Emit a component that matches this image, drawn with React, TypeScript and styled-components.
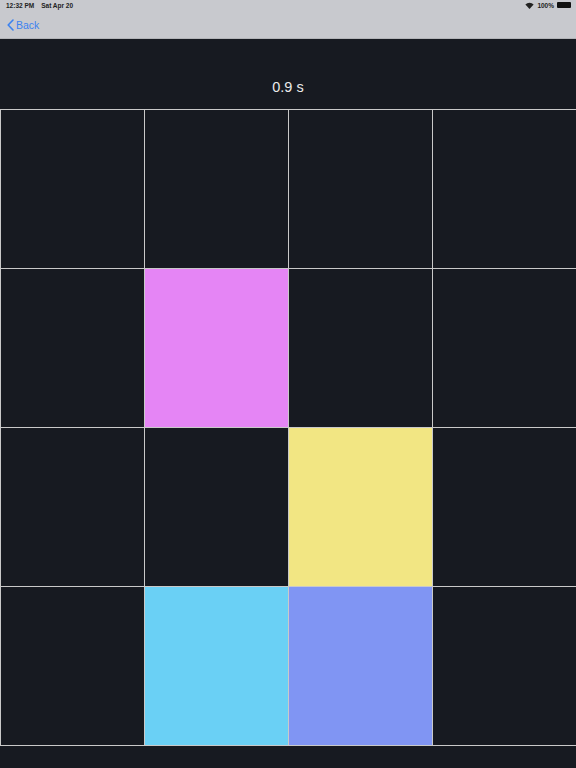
import React from "react";
import styled, { createGlobalStyle } from "styled-components";

type Cell = string | null;

const cells: Cell[] = [
  null, null, null, null,
  null, "#e585f5", null, null,
  null, null, "#f2e683", null,
  null, "#6ad0f5", "#8095f3", null,
];

const GlobalStyle = createGlobalStyle`
  html, body {
    margin: 0;
    padding: 0;
    background: #171a21;
    font-family: "Helvetica Neue", "Liberation Sans", Arial, sans-serif;
  }
`;

const Page = styled.div`
  width: 576px;
  height: 768px;
  overflow: hidden;
  background: #171a21;
  display: flex;
  flex-direction: column;
`;

const TopBar = styled.div`
  background: #c8c9ce;
  border-bottom: 1px solid #b3b4b8;
  height: 38px;
  display: flex;
  flex-direction: column;
`;

const StatusBar = styled.div`
  height: 10px;
  display: flex;
  align-items: center;
  justify-content: space-between;
  padding: 0 5px 0 6px;
  font-size: 6.5px;
  color: #222;
  font-weight: 600;
`;

const StatusLeft = styled.div`
  display: flex;
  gap: 7px;
`;

const StatusRight = styled.div`
  display: flex;
  align-items: center;
  gap: 3px;
`;

const Battery = styled.div`
  width: 14px;
  height: 6px;
  background: #111;
  border-radius: 1px;
`;

const NavBar = styled.div`
  flex: 1;
  display: flex;
  align-items: center;
  padding-left: 7px;
  padding-top: 2px;
`;

const BackButton = styled.div`
  display: flex;
  align-items: center;
  gap: 2px;
  color: #3b82f0;
  font-size: 10.5px;
`;

const TimerArea = styled.div`
  height: 70px;
  display: flex;
  align-items: flex-end;
  justify-content: center;
  color: #ebebeb;
  font-size: 14.5px;
  padding-bottom: 14px;
  box-sizing: border-box;
`;

const Grid = styled.div`
  display: grid;
  grid-template-columns: 143px 143px 143px 143px;
  grid-template-rows: repeat(4, 158px);
  gap: 1px;
  width: 576px;
  background: #c9c9c9;
  border-top: 1px solid #c9c9c9;
  border-bottom: 1px solid #c9c9c9;
  border-left: 1px solid #c9c9c9;
  box-sizing: border-box;
`;

const Square = styled.div<{ $color: Cell }>`
  background: ${(p) => p.$color ?? "#171a21"};
`;

export default function App() {
  return (
    <Page>
      <GlobalStyle />
      <TopBar>
        <StatusBar>
          <StatusLeft>
            <span>12:32 PM</span>
            <span>Sat Apr 20</span>
          </StatusLeft>
          <StatusRight>
            <svg width="9" height="7" viewBox="0 0 12 9">
              <path d="M6 9 L0.5 3 A8 8 0 0 1 11.5 3 Z" fill="#222" />
            </svg>
            <span>100%</span>
            <Battery />
          </StatusRight>
        </StatusBar>
        <NavBar>
          <BackButton>
            <svg width="7" height="12" viewBox="0 0 7 12">
              <path d="M6 1 L1.2 6 L6 11" fill="none" stroke="#3b82f0" strokeWidth="1.6" strokeLinecap="round" strokeLinejoin="round" />
            </svg>
            <span>Back</span>
          </BackButton>
        </NavBar>
      </TopBar>
      <TimerArea>0.9 s</TimerArea>
      <Grid>
        {cells.map((c, i) => (
          <Square key={i} $color={c} />
        ))}
      </Grid>
    </Page>
  );
}
